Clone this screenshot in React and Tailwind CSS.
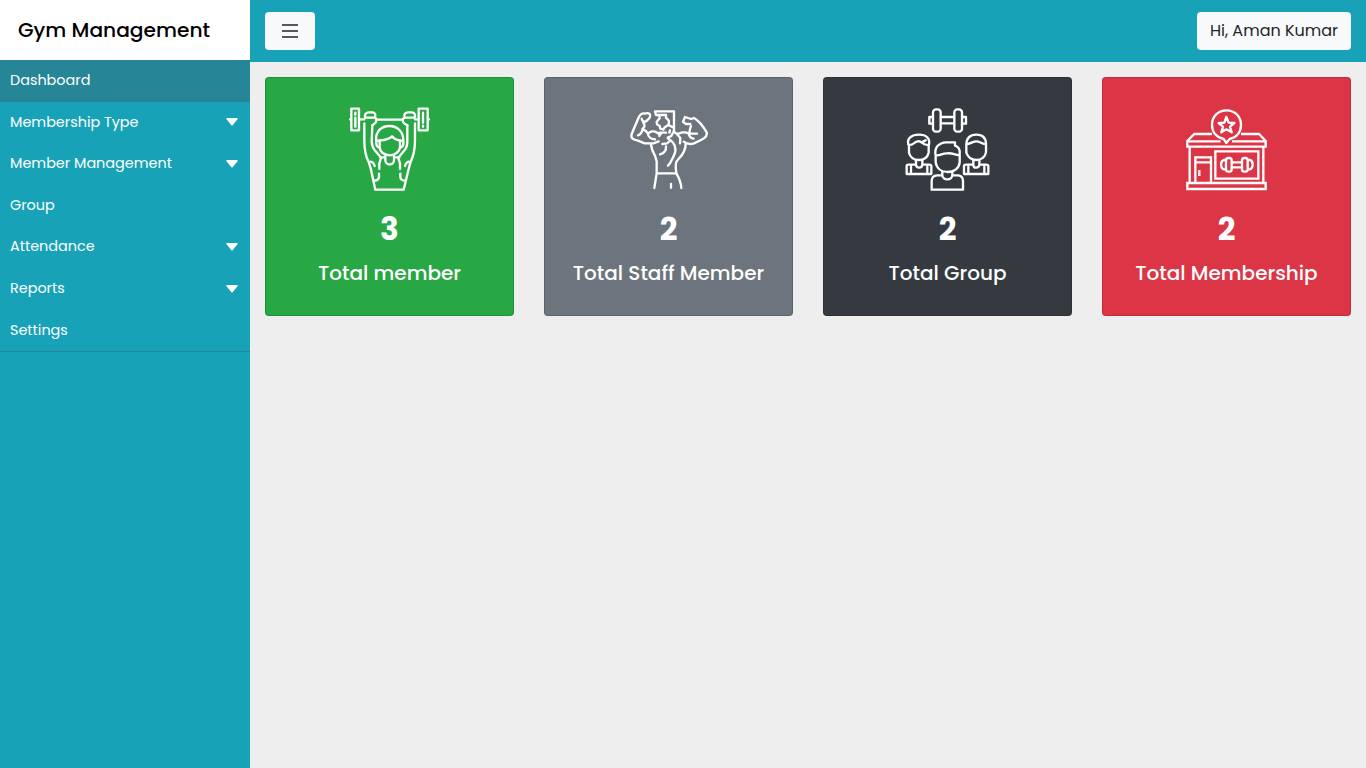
const menu = [
  { label: 'Dashboard', active: true },
  { label: 'Membership Type', sub: true },
  { label: 'Member Management', sub: true },
  { label: 'Group' },
  { label: 'Attendance', sub: true },
  { label: 'Reports', sub: true },
  { label: 'Settings' },
];

function Drawing({ viewBox, children }) {
  return (
    <svg
      viewBox={viewBox}
      className="h-[100px] w-[101px] shrink-0"
      fill="none"
      stroke="white"
      strokeWidth="7"
      strokeLinejoin="round"
      strokeLinecap="round"
    >
      {children}
    </svg>
  );
}

function LifterIcon() {
  return (
    <Drawing viewBox="-3 0 303 300">
      <path d="M34 26H57V91H34ZM46 38V44M46 53V80M30 58H33M59 58H73M110 59H187M225 58H236" />
      <path d="M236 26H263V91H236ZM249 38V68M249 77V80M263 58H267" />
      <path d="M75 53C73 43 78 37 87 37H97C105 37 108 44 105 53ZM105 53C111 56 110 67 103 71L97 76" />
      <path d="M194 53C190 43 196 37 205 37H215C224 37 227 45 224 53ZM194 53C186 56 187 66 194 71L202 76" />
      <path d="M73 70V120C73 148 77 170 86 186L92 205L106 269H191L206 207L211 188C220 170 225 148 225 121V70" />
      <path d="M97 76L95 125C96 138 100 147 107 154L122 172M202 76V125C202 138 198 147 190 155L176 172" />
      <path d="M108 121C107 95 123 78 148 78C173 78 190 96 190 121M119 121C137 120 149 116 156 109C164 119 170 121 180 121V142C178 157 162 166 149 166C134 164 120 157 119 142V121Z" />
      <path d="M119 122H109V131C109 138 114 142 119 142M180 122H190V131C190 138 185 142 180 142" />
      <path d="M136 168V180C136 198 162 198 162 180V168M136 172H121M162 172H178" />
      <path d="M123 174L118 190V207M175 174L180 190V207M117 221V231C116 238 111 242 102 242M181 221V232C182 238 188 242 197 242M92 185C99 186 102 191 104 198M207 185C200 186 197 191 195 198" />
    </Drawing>
  );
}

function MuscleIcon() {
  return (
    <Drawing viewBox="-6 0 303 300">
      <path d="M65 56C66 64 73 68 79 63C89 55 94 48 89 42C84 38 79 39 75 41C66 38 58 45 55 55L46 76L35 102C31 115 40 119 54 122L74 130H100L116 124" />
      <path d="M70 68C75 74 75 81 68 86C66 96 63 103 54 106M68 88C75 90 81 95 84 101C90 94 101 92 108 96L118 103M84 101C84 110 93 117 105 118" />
      <path d="M105 34H162V92M105 34L108 45H138V54C146 58 149 66 145 75L161 83M118 48L119 55L110 65L111 73L119 78L121 86L130 89L134 82L145 75" />
      <path d="M118 98H138M124 98L118 108M162 92L154 108L143 113M150 91L148 98" />
      <path d="M162 96L172 102L187 97H197L206 101H231M207 102C208 110 213 115 221 116M208 98C209 90 210 84 213 78" />
      <path d="M211 72H198L189 66L195 51L213 57L222 54C236 62 249 78 260 97C264 108 255 114 243 120L222 130C210 134 199 131 191 125" />
      <path d="M93 133C94 148 99 156 105 167L110 184V220L103 264M197 131C197 150 189 163 177 175C165 185 166 200 169 220C178 235 183 248 184 264" />
      <path d="M112 220H169M153 252V263M120 163C131 160 139 152 138 139M127 132L141 130L148 124M145 116C166 128 171 149 162 166C156 177 153 189 144 197M171 103L181 114L180 130" />
    </Drawing>
  );
}

function TeamIcon() {
  return (
    <Drawing viewBox="-3 0 303 300">
      <rect x="105" y="28" width="23" height="67" rx="9" />
      <rect x="169" y="28" width="23" height="67" rx="9" />
      <path d="M104 51H94V71H104M129 51H168M129 70H168M193 51H204V71H193" />
      <path d="M33 134V158C36 171 48 180 62 180C78 180 89 171 92 158V134C71 138 75 122 59 124C45 126 49 137 31 134C26 116 40 104 63 104C85 104 97 115 93 134M76 124L83 121" />
      <path d="M205 133V158C209 171 221 180 235 180C250 180 262 170 264 157V133M205 133C206 113 216 104 235 104C254 104 264 114 264 133M205 133C224 129 224 124 235 124C246 124 247 130 264 133" />
      <path d="M54 181V194H30Q26 194 26 199V222H100V199Q100 194 93 194H73V181M54 194C55 206 72 206 73 194M39 200V222M88 200V222" />
      <path d="M226 181V194H203Q198 194 198 199V222H271V199Q271 194 264 194H244V181M226 194C226 206 243 206 244 194M211 200V222M259 200V222" />
      <path d="M113 166V187C116 205 130 216 149 216C169 216 183 204 185 188V164M113 166C108 143 122 128 145 127H171V137C183 141 187 150 185 164M113 166C131 167 131 159 148 160C166 158 168 165 185 165" />
      <path d="M133 216V226H117Q101 227 101 243V269H195V243Q195 228 181 226H163V216M133 226C133 242 163 242 163 226" />
    </Drawing>
  );
}

function GymIcon() {
  return (
    <Drawing viewBox="-3 0 303 300">
      <g strokeLinejoin="miter" strokeLinecap="butt">
        <path d="M105 102H52L31 123V140H266V123L246 102H192M31 124H131M165 124H266M38 141V248M259 141V248M31 249H266V267H31Z" />
        <path d="M55 248V172H102V248M55 187H102M67 210V228M115 154H244V236H115Z" />
      </g>
      <path d="M148 129L140 117C118 112 105 96 105 75C105 49 124 31 149 31C174 31 192 50 192 75C192 96 179 113 158 117Z" />
      <path d="M148 51L155 68L172 69L159 80L164 97L148 88L133 97L138 80L125 69L142 68Z" />
      <rect x="147" y="174" width="17" height="41" rx="7" />
      <rect x="195" y="174" width="17" height="41" rx="7" />
      <path d="M146 180H140Q133 182 132 194Q133 207 141 208H146M165 187H194M165 202H194M213 180H219Q227 182 227 194Q226 207 218 208H213" />
    </Drawing>
  );
}

const cards = [
  { count: 3, label: 'Total member', Icon: LifterIcon, color: 'bg-[#28a745]' },
  { count: 2, label: 'Total Staff Member', Icon: MuscleIcon, color: 'bg-[#6c757d]' },
  { count: 2, label: 'Total Group', Icon: TeamIcon, color: 'bg-[#343a40]' },
  { count: 2, label: 'Total Membership', Icon: GymIcon, color: 'bg-[#dc3545]' },
];

export default function App() {
  return (
    <div className="flex h-screen overflow-hidden bg-[#eeeeee] font-[Poppins,Inter,sans-serif]">
      <aside className="w-[250px] shrink-0 bg-[#17a2b8]">
        <div className="flex h-[60px] items-center bg-white pl-[18px] text-[20.2px] font-medium text-black">
          <h1 className="whitespace-nowrap">Gym Management</h1>
        </div>
        <ul className="border-b border-[#268596]">
          {menu.map(({ label, active, sub }) => (
            <li
              key={label}
              className={`flex h-[41.6px] items-center justify-between pr-3 pl-2.5 text-[14.4px] text-white ${active ? 'bg-[#268596]' : ''}`}
            >
              <span className="whitespace-nowrap">{label}</span>
              {sub && (
                <svg viewBox="0 0 12 8" className="h-2 w-3 fill-white">
                  <path d="M1 0H11Q12 0 11.7 1L6.8 7Q6 8 5.2 7L.3 1Q0 0 1 0Z" />
                </svg>
              )}
            </li>
          ))}
        </ul>
      </aside>
      <div className="min-w-0 flex-1">
        <header className="flex h-[62px] items-center justify-between bg-[#17a2b8] px-[15px]">
          <button className="flex h-[38px] w-[50px] items-center justify-center rounded bg-[#f8f9fa]" aria-label="Menu">
            <svg viewBox="0 0 16 14" className="h-3.5 w-4 stroke-[#55595d]" strokeWidth="2">
              <path d="M0 1H16M0 7H16M0 13H16" />
            </svg>
          </button>
          <button className="flex h-[38px] w-[154px] items-center justify-center rounded bg-[#f8f9fa] text-[16px] whitespace-nowrap text-[#212529]">
            Hi, Aman Kumar
          </button>
        </header>
        <main className="grid grid-cols-4 gap-[30px] p-[15px]">
          {cards.map(({ count, label, Icon, color }) => (
            <section
              key={label}
              className={`flex h-[239px] flex-col items-center rounded border border-black/15 pt-[22px] text-white ${color}`}
            >
              <Icon />
              <p className="mt-[10px] text-[31px] leading-[38px] font-bold">{count}</p>
              <h2 className="mt-[13px] text-[20px] leading-6 font-medium whitespace-nowrap">{label}</h2>
            </section>
          ))}
        </main>
      </div>
    </div>
  );
}
